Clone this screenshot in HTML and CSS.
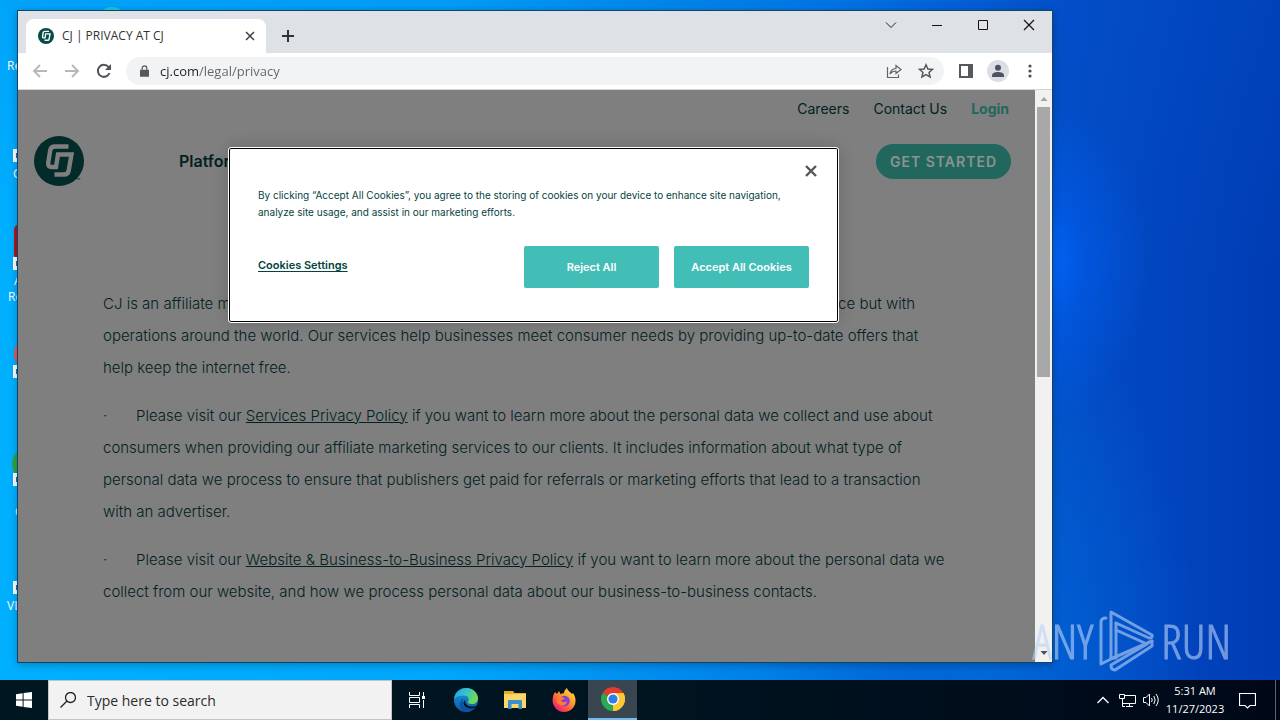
FILE: index.html
```html
<!DOCTYPE html>
<html lang="en">
<head>
<meta charset="utf-8">
<title>CJ | PRIVACY AT CJ</title>
<link rel="stylesheet" href="styles.css">
</head>
<body>
<svg class="defs" aria-hidden="true">
  <symbol id="cj" viewBox="0 0 50 50">
    <circle cx="25" cy="25" r="25" fill="var(--disc)"/>
    <path d="M34.500 10.500H21Q17 10.500 16.300 14L14.200 27Q13.800 31 17.500 31H22L24 18.500H37.500L34.700 34.500Q34 38.500 30 38.500H20.500" fill="none" stroke="var(--mark)" stroke-width="4.400"/>
  </symbol>
</svg>
<main class="desktop">
  <ul class="shortcuts">
    <li class="shortcut s1"><span class="label">Re</span></li>
    <li class="shortcut s2"><i class="badge"></i><span class="label far">G</span></li>
    <li class="shortcut s3"><i class="art red"></i><i class="badge"></i><span class="label far">A</span><span class="label">Re</span></li>
    <li class="shortcut s4"><i class="art coral"></i><i class="badge"></i></li>
    <li class="shortcut s5"><i class="art green"></i><i class="badge"></i><span class="label farther">C</span></li>
    <li class="shortcut s6"><i class="badge"></i><span class="label">VL</span></li>
  </ul>
  <i class="peek"></i>

  <section class="window">
    <div class="tabstrip">
      <div class="tab">
        <svg class="favicon" viewBox="0 0 50 50"><use href="#cj"/></svg>
        <span class="tab-title">CJ | PRIVACY AT CJ</span>
        <button class="plain tab-close" aria-label="Close tab"><svg width="10" height="10" viewBox="0 0 10 10"><path d="M1 1L9 9M9 1L1 9" stroke="#3c4043" stroke-width="1.500"/></svg></button>
      </div>
      <button class="plain new-tab" aria-label="New tab"><svg width="12" height="12" viewBox="0 0 12 12"><path d="M6 0V12M0 6H12" stroke="#303236" stroke-width="2"/></svg></button>
      <div class="controls">
        <button class="plain" aria-label="Search tabs"><svg width="12" height="12" viewBox="0 0 12 12"><path d="M1 3.500L6 8.500L11 3.500" fill="none" stroke="#222"/></svg></button>
        <button class="plain" aria-label="Minimize"><svg width="12" height="12" viewBox="0 0 12 12"><path d="M1 6.500H11" stroke="#111"/></svg></button>
        <button class="plain" aria-label="Maximize"><svg width="12" height="12" viewBox="0 0 12 12"><path d="M1.500 1.500H10.500V10.500H1.500Z" fill="none" stroke="#111"/></svg></button>
        <button class="plain" aria-label="Close"><svg width="12" height="12" viewBox="0 0 12 12"><path d="M1 1L11 11M11 1L1 11" stroke="#111" stroke-width="1.200"/></svg></button>
      </div>
    </div>

    <div class="toolbar">
      <button class="plain tool" aria-label="Back"><svg width="16" height="16" viewBox="0 0 16 16"><path d="M15 8H2M8 2L2 8L8 14" fill="none" stroke="#b5b7ba" stroke-width="1.800"/></svg></button>
      <button class="plain tool" aria-label="Forward"><svg width="16" height="16" viewBox="0 0 16 16"><path d="M1 8H14M8 2L14 8L8 14" fill="none" stroke="#b5b7ba" stroke-width="1.800"/></svg></button>
      <button class="plain tool" aria-label="Reload"><svg width="16" height="16" viewBox="0 0 16 16"><path d="M13.500 10A6 6 0 1 1 12.500 4" fill="none" stroke="#505357" stroke-width="2"/><path d="M15 1V7H9Z" fill="#505357"/></svg></button>
      <div class="omnibox">
        <svg width="9" height="12" viewBox="0 0 10 13"><path d="M0 5H10V12Q10 13 9 13H1Q0 13 0 12Z" fill="#55585c"/><path d="M2.500 5V3.200A2.500 2.500 0 0 1 7.500 3.200V5" fill="none" stroke="#55585c" stroke-width="1.400"/></svg>
        <input class="address" type="text" aria-label="Address" value="cj.com/legal/privacy">
        <button class="plain tool" aria-label="Share"><svg width="16" height="16" viewBox="0 0 16 16"><path d="M1.500 4V14.500H12.500V11.500M4 11C4.500 7.500 6.500 5.800 10 5.500V2.500L15 6.500L10 10.500V8C7.500 8 5.500 9 4 11Z" fill="none" stroke="#606368" stroke-width="1.200"/></svg></button>
        <button class="plain tool" aria-label="Bookmark"><svg width="16" height="16" viewBox="0 0 16 16"><path d="M8 1.800L9.900 6L14.500 6.400L11 9.400L12.100 13.900L8 11.500L3.900 13.900L5 9.400L1.500 6.400L6.100 6Z" fill="none" stroke="#55585c" stroke-width="1.500"/></svg></button>
      </div>
      <button class="plain tool" aria-label="Side panel"><svg width="14" height="14" viewBox="0 0 14 14"><path d="M0 0H14V14H0ZM2 2V12H9V2Z" fill="#55585c" fill-rule="evenodd"/></svg></button>
      <button class="plain tool" aria-label="Profile"><svg width="22" height="22" viewBox="0 0 22 22"><circle cx="11" cy="11" r="11" fill="#dcdee3"/><circle cx="11" cy="7.800" r="3" fill="#4c5262"/><path d="M5 17V15.500C5 13 8 12 11 12S17 13 17 15.500V17Z" fill="#4c5262"/></svg></button>
      <button class="plain tool" aria-label="Menu"><svg width="4" height="14" viewBox="0 0 4 14"><g fill="#4a4d51"><circle cx="2" cy="2" r="1.600"/><circle cx="2" cy="7" r="1.600"/><circle cx="2" cy="12" r="1.600"/></g></svg></button>
    </div>

    <div class="viewport">
      <div class="page">
        <nav class="top-links"><a href="#">Careers</a><a href="#">Contact Us</a><a class="login" href="#">Login</a></nav>
        <header class="site-header">
          <span class="brand"><svg class="logo" viewBox="0 0 50 50"><use href="#cj"/></svg><small class="tm">™</small></span>
          <a class="nav-item" href="#">Platform</a>
          <button class="started">GET STARTED</button>
        </header>
        <article class="copy">
          <p><span class="split"><span>CJ is an affiliate m</span><span>ce but with</span></span>operations around the world. Our services help businesses meet consumer needs by providing up-to-date offers that<br>help keep the internet free.</p>
          <p><span class="dot">·</span>Please visit our <a href="#">Services Privacy Policy</a> if you want to learn more about the personal data we collect and use about<br>consumers when providing our affiliate marketing services to our clients. It includes information about what type of<br>personal data we process to ensure that publishers get paid for referrals or marketing efforts that lead to a transaction<br>with an advertiser.</p>
          <p><span class="dot">·</span>Please visit our <a href="#">Website &amp; Business-to-Business Privacy Policy</a> if you want to learn more about the personal data we<br>collect from our website, and how we process personal data about our business-to-business contacts.</p>
        </article>
        <div class="overlay">
          <div class="dialog" role="dialog" aria-label="Cookies">
            <button class="plain dismiss" aria-label="Close"><svg width="12" height="12" viewBox="0 0 12 12"><path d="M1 1L11 11M11 1L1 11" stroke="#565656" stroke-width="2.400"/></svg></button>
            <p class="notice">By clicking “Accept All Cookies”, you agree to the storing of cookies on your device to enhance site navigation,<br>analyze site usage, and assist in our marketing efforts.</p>
            <div class="actions">
              <button class="plain settings">Cookies Settings</button>
              <button class="choice">Reject All</button>
              <button class="choice">Accept All Cookies</button>
            </div>
          </div>
        </div>
      </div>
      <div class="scrollbar">
        <svg width="16" height="17" viewBox="0 0 16 17"><path d="M4.500 11L8 7L11.500 11Z" fill="#a3a3a3"/></svg>
        <i class="thumb"></i>
        <svg width="16" height="17" viewBox="0 0 16 17"><path d="M4.500 6L8 10L11.500 6Z" fill="#505050"/></svg>
      </div>
    </div>
  </section>

  <div class="watermark">
    <span>ANY</span>
    <svg width="56" height="62" viewBox="0 0 56 62"><g fill="none" stroke="#bcd3f8" stroke-width="3" stroke-linejoin="round" stroke-linecap="round"><path d="M7 8Q2 8 2 12V54L14 48L53 31"/><path d="M12 48V2L53 25Q54 28 50 28L17 13"/><path d="M12 48H17V13"/><path d="M17 20L48 34L12 55Q12 60 16 60L53 36V31"/></g></svg>
    <span>RUN</span>
  </div>
</main>

<footer class="taskbar">
  <button class="plain start" aria-label="Start"><svg width="16" height="16" viewBox="0 0 16 16"><path d="M0 2.300L6.600 1.300V7.500H0ZM7.600 1.100L16 0V7.500H7.600ZM0 8.500H6.600V14.700L0 13.700ZM7.600 8.500H16V16L7.600 14.900Z" fill="#fff"/></svg></button>
  <label class="search">
    <svg width="16" height="16" viewBox="0 0 16 16"><circle cx="10.500" cy="5.500" r="5" fill="none" stroke="#222" stroke-width="1.300"/><path d="M7 9L.5 15.500" stroke="#222" stroke-width="1.300"/></svg>
    <input class="search-text" type="text" aria-label="Search" placeholder="Type here to search">
  </label>
  <div class="apps">
    <button class="plain app" aria-label="Task View"><svg width="16" height="16" viewBox="0 0 16 16"><path d="M.5 0V3.500H10.500V0M.5 16V12.500H10.500V16M.5 5.500H10.500V10.500H.5ZM14.500 0V4M14.500 8V16" fill="none" stroke="#fff"/><path d="M13 4H16V7H13Z" fill="#fff"/></svg></button>
    <button class="plain app" aria-label="Edge"><svg width="24" height="24" viewBox="0 0 24 24">
      <defs><linearGradient id="e1" x1="0" y1="0" x2="1" y2=".4"><stop offset="0" stop-color="#1b9de2"/><stop offset=".5" stop-color="#35c1d0"/><stop offset="1" stop-color="#6ddc54"/></linearGradient><linearGradient id="e2" x1="0" y1="0" x2="0" y2="1"><stop offset="0" stop-color="#1c9ce0"/><stop offset="1" stop-color="#0a58a8"/></linearGradient></defs>
      <circle cx="12" cy="12" r="12" fill="url(#e2)"/>
      <path d="M0 11C1 4 6 0 12 0C19 0 24 5 24 10.500C24 14 21 16 18 16C15 16 13.500 15 14 14C16 11 14.500 7.500 9.500 7.500C5 7.500 1.500 9 0 11Z" fill="url(#e1)"/>
      <path d="M9.500 10.500C6.500 15 10 20 15 20.500C18 20.700 20.500 19.500 22.200 18C19.500 23 14 24.500 10.500 23.800C4 20.500 5 12 9.500 10.500Z" fill="#10509c"/>
      <path d="M11.500 11.500C10 15 13 18.500 18 18.500C20.500 18.500 22 18 23 17L21.500 19.500C15 22 9 19 9.500 14Z" fill="#001722"/>
    </svg></button>
    <button class="plain app" aria-label="File Explorer"><svg width="22" height="20" viewBox="0 0 22 20"><path d="M0 1H9L10.500 3H22V18H0Z" fill="#e7ad25"/><path d="M0 4H22V18H0Z" fill="#fbd768"/><path d="M4 19V11Q4 10 5 10H17Q18 10 18 11V19H14.500V14H7.500V19Z" fill="#3a8fd2"/></svg></button>
    <button class="plain app" aria-label="Firefox"><svg width="24" height="24" viewBox="0 0 24 24">
      <defs><linearGradient id="f1" x1="1" y1="0" x2=".2" y2="1"><stop offset="0" stop-color="#fff04a"/><stop offset=".4" stop-color="#ffa52a"/><stop offset=".75" stop-color="#ff4b45"/><stop offset="1" stop-color="#e31587"/></linearGradient></defs>
      <path d="M3 4L5 6L7 3L8.500 6L12 5C12 3 13.500 1 15 0C15.500 3 19 4.500 20 6L21 5C23 8 24 11 23.400 14.500C22.500 20 18 24 12 24C5.500 24 1 19 .6 13C.5 9 1.500 6 3 4Z" fill="url(#f1)"/>
      <circle cx="12.500" cy="13" r="5.300" fill="#8440d4"/>
      <path d="M4 10C7 7 11 9 13 11C11 11 10 12 9 13C11 15 14 14 15 13C15 16.500 11.500 18.500 8 17C5.500 16 4 13 4 10Z" fill="#ff7b34"/>
    </svg></button>
    <button class="plain app active" aria-label="Chrome"><svg width="24" height="24" viewBox="0 0 24 24"><path d="M12 12L1.610 6A12 12 0 0 1 22.390 6Z" fill="#e33b2e"/><path d="M12 12L22.390 6A12 12 0 0 1 12 24Z" fill="#fcc934"/><path d="M12 12L12 24A12 12 0 0 1 1.610 6Z" fill="#2da94f"/><path d="M12 6H22.390A12 12 0 0 1 12 24L17.200 15Z" fill="#fcc934"/><circle cx="12" cy="12" r="6" fill="#fff"/><circle cx="12" cy="12" r="4.600" fill="#2f7de8"/></svg></button>
  </div>
  <div class="tray">
    <button class="plain" aria-label="Hidden icons"><svg width="12" height="8" viewBox="0 0 12 8"><path d="M.5 7L6 1.500L11.500 7" fill="none" stroke="#fff" stroke-width="1.300"/></svg></button>
    <button class="plain" aria-label="Network"><svg width="17" height="14" viewBox="0 0 17 14"><path d="M6 2.500H16.500V10.500H3.500V7M10.500 10.500V13M7 13.500H14M.5 1.500H5.500V5.500H.5ZM3.500 5.500V13.500H6" fill="none" stroke="#fff"/></svg></button>
    <button class="plain" aria-label="Volume"><svg width="17" height="14" viewBox="0 0 17 14"><path d="M.5 4.500H3L6.500 1V13L3 9.500H.5ZM8.500 5Q10 7 8.500 9M10.800 3Q13.500 7 10.800 11M13 1Q17.500 7 13 13" fill="none" stroke="#fff"/></svg></button>
    <time class="clock"><span>5:31 AM</span><span>11/27/2023</span></time>
    <button class="plain" aria-label="Notifications"><svg width="17" height="17" viewBox="0 0 17 17"><path d="M.5 1.500H16.500V13.500H11L8.500 16L6 13.500H.5Z" fill="none" stroke="#fff" stroke-width="1.200"/></svg></button>
    <i class="edge"></i>
  </div>
</footer>
</body>
</html>
```
FILE: styles.css
```css
* { box-sizing: border-box; }
body {
  margin: 0;
  height: 100vh;
  display: flex;
  flex-direction: column;
  overflow: hidden;
  font-family: "Open Sans", "Noto Sans", sans-serif;
}
.defs { position: absolute; width: 0; height: 0; }
.plain { border: 0; padding: 0; background: none; font: inherit; color: inherit; display: flex; align-items: center; justify-content: center; }
p, ul { margin: 0; padding: 0; }

/* desktop */
.desktop {
  flex: 1;
  position: relative;
  background:
    radial-gradient(ellipse 110px 160px at 1040px 262px, #0068ff 0%, #005ff088 40%, transparent 100%),
    radial-gradient(ellipse 220px 400px at 980px 680px, #0068d8 0%, transparent 100%),
    linear-gradient(to bottom, #0060d828, transparent 40%),
    linear-gradient(to right, #00b0ff 0%, #00a6fb 35%, #0078e4 65%, #034cc6 83%, #003cb4 100%);
}
.shortcuts { list-style: none; }
.shortcut { position: absolute; left: 0; width: 76px; height: 80px; padding: 59px 0 0 7px; color: #fff; font-size: 12px; line-height: 14px; }
.s1 { top: 0; } .s2 { top: 108px; } .s3 { top: 216px; } .s4 { top: 324px; } .s5 { top: 432px; } .s6 { top: 540px; }
.label { display: block; }
.far { padding-left: 6px; }
.farther { padding: 14px 0 0 8px; }
.s3 { padding-left: 8px; line-height: 16px; padding-top: 57px; }
.badge { position: absolute; left: 13px; top: 41px; width: 12px; height: 13px; background: #fff; }
.badge::after { content: ""; position: absolute; left: 3px; top: 4px; width: 5px; height: 5px; background: #1c6bbb; }
.art { position: absolute; left: 14px; top: 8px; width: 40px; height: 36px; border-radius: 6px; }
.red { background: #b3161b; }
.coral { background: #ee5555; border-radius: 50%; top: 12px; }
.green { background: #2ea346; border-radius: 50%; left: 12px; top: 14px; }
.peek { position: absolute; left: 98px; top: 7px; width: 28px; height: 28px; border-radius: 50%; background: #1fc3d8; }

/* browser window */
.window {
  position: absolute;
  inset: 10px 227px 17px 17px;
  border: 1px solid #12436b;
  display: flex;
  flex-direction: column;
  background: #fff;
  box-shadow: 0 2px 8px #00000040;
}
.tabstrip { height: 42px; background: #dee1e6; display: flex; padding-left: 8px; }
.tab { width: 240px; margin-top: 8px; background: #fff; border-radius: 8px 8px 0 0; display: flex; align-items: center; padding: 0 10px 0 12px; }
.favicon { width: 16px; height: 16px; --disc: #054b47; --mark: #fff; }
.tab-title { flex: 1; margin-left: 8px; font-size: 12px; line-height: 16px; color: #333; }
.tab-close { width: 12px; height: 16px; }
.new-tab { width: 28px; height: 28px; margin: 11px 0 0 8px; }
.controls { margin-left: auto; display: flex; height: 28px; }
.controls button { width: 46px; }
.toolbar { height: 37px; display: flex; align-items: center; padding: 0 6px; border-bottom: 1px solid #d4d4d4; }
.tool { width: 32px; height: 28px; }
.omnibox { flex: 1; height: 28px; margin: 0 6px; background: #f1f3f4; border-radius: 14px; display: flex; align-items: center; padding: 0 2px 0 14px; }
.address {
  flex: 1;
  min-width: 0;
  border: 0;
  padding: 0;
  margin-left: 11px;
  font: 13px "Open Sans", "Noto Sans", sans-serif;
  color: transparent;
  background: linear-gradient(to right, #202124 39px, #606368 39px);
  background-clip: text;
  -webkit-background-clip: text;
}

/* page */
.viewport { flex: 1; min-height: 0; display: flex; }
.page { flex: 1; position: relative; background: #7f7f7f; overflow: hidden; color: #02221f; font-family: Inter, sans-serif; }
.page a { color: inherit; }
.top-links { display: flex; justify-content: flex-end; gap: 24px; padding: 9px 26px 0 0; font-size: 14px; line-height: 20px; }
.top-links a, .nav-item { text-decoration: none; }
.page .login { color: #21675e; font-weight: 700; }
.site-header { display: flex; align-items: center; height: 50px; margin-top: 17px; padding: 0 24px 0 16px; }
.brand { display: flex; align-items: flex-end; width: 145px; }
.logo { width: 50px; height: 50px; --disc: #022b29; --mark: #7f7f7f; }
.tm { font-size: 7px; line-height: 8px; margin-left: -8px; }
.nav-item { flex: 1; font-size: 16px; font-weight: 600; }
.page .started { border: 0; border-radius: 18px; background: #21675e; color: #8d9391; font: 600 14px Inter, sans-serif; letter-spacing: 1px; width: 135px; height: 35px; padding: 0; }
.copy { padding: 102px 0 0 85px; font-size: 15px; font-weight: 300; line-height: 32px; white-space: nowrap; }
.copy p { margin-bottom: 16px; }
.split { display: flex; justify-content: space-between; width: 812px; }
.dot { display: inline-block; width: 33px; }

.overlay { position: absolute; inset: 0; display: flex; justify-content: center; align-items: flex-start; padding: 58px 0 0 14px; }
.dialog { width: 609px; border: 1px solid #000; outline: 1px solid #fff; border-radius: 2px; background: #fff; box-shadow: 0 0 18px #00000033; padding: 14px 28px 33px; color: #05433f; }
.dismiss { width: 16px; height: 16px; margin: 0 -10px 0 auto; }
.notice { font-size: 10px; line-height: 17px; margin-top: 8px; white-space: nowrap; }
.actions { display: flex; align-items: center; gap: 15px; margin-top: 25px; font-size: 11px; font-weight: 600; }
.settings { margin-right: auto; padding-bottom: 4px; text-decoration: underline; text-underline-offset: 2px; }
.choice { width: 135px; height: 42px; border: 0; border-radius: 2px; padding: 0; background: #43beb7; color: #fff; font: 600 11px Inter, sans-serif; }

.scrollbar { width: 17px; background: #f1f1f1; display: flex; flex-direction: column; align-items: center; }
.thumb { width: 13px; height: 270px; background: #a8a8a8; margin-bottom: auto; }

.watermark { position: absolute; right: 49px; bottom: 8px; display: flex; align-items: center; gap: 6px; font: 300 48px/62px "Open Sans Condensed Light", "Open Sans Condensed", "Roboto Condensed", Roboto, sans-serif; color: #bcd3f8; -webkit-text-stroke: 1px #bcd3f8; opacity: .6; }

/* taskbar */
.taskbar { height: 40px; display: flex; background: linear-gradient(to right, #001722, #001420 50%, #000818); color: #fff; }
.start { width: 48px; }
.search { width: 344px; background: #f2f2f2; border: 1px solid #c4c4c4; display: flex; align-items: center; padding-left: 11px; }
.search-text { flex: 1; min-width: 0; border: 0; background: none; padding: 0; margin-left: 11px; font: 14px "Open Sans", "Noto Sans", sans-serif; }
.search-text::placeholder { color: #2b2b2b; }
.apps { display: flex; }
.app { width: 49px; }
.active { background: #39464f; border-bottom: 2px solid #76b9ed; }
.tray { margin-left: auto; display: flex; align-items: center; }
.tray button { width: 24px; height: 40px; }
.clock { display: flex; flex-direction: column; align-items: center; width: 64px; font-size: 11px; line-height: 18px; }
.tray .clock + button { width: 40px; }
.edge { height: 40px; border-left: 1px solid #5b6470; width: 5px; margin-left: 8px; }
```
